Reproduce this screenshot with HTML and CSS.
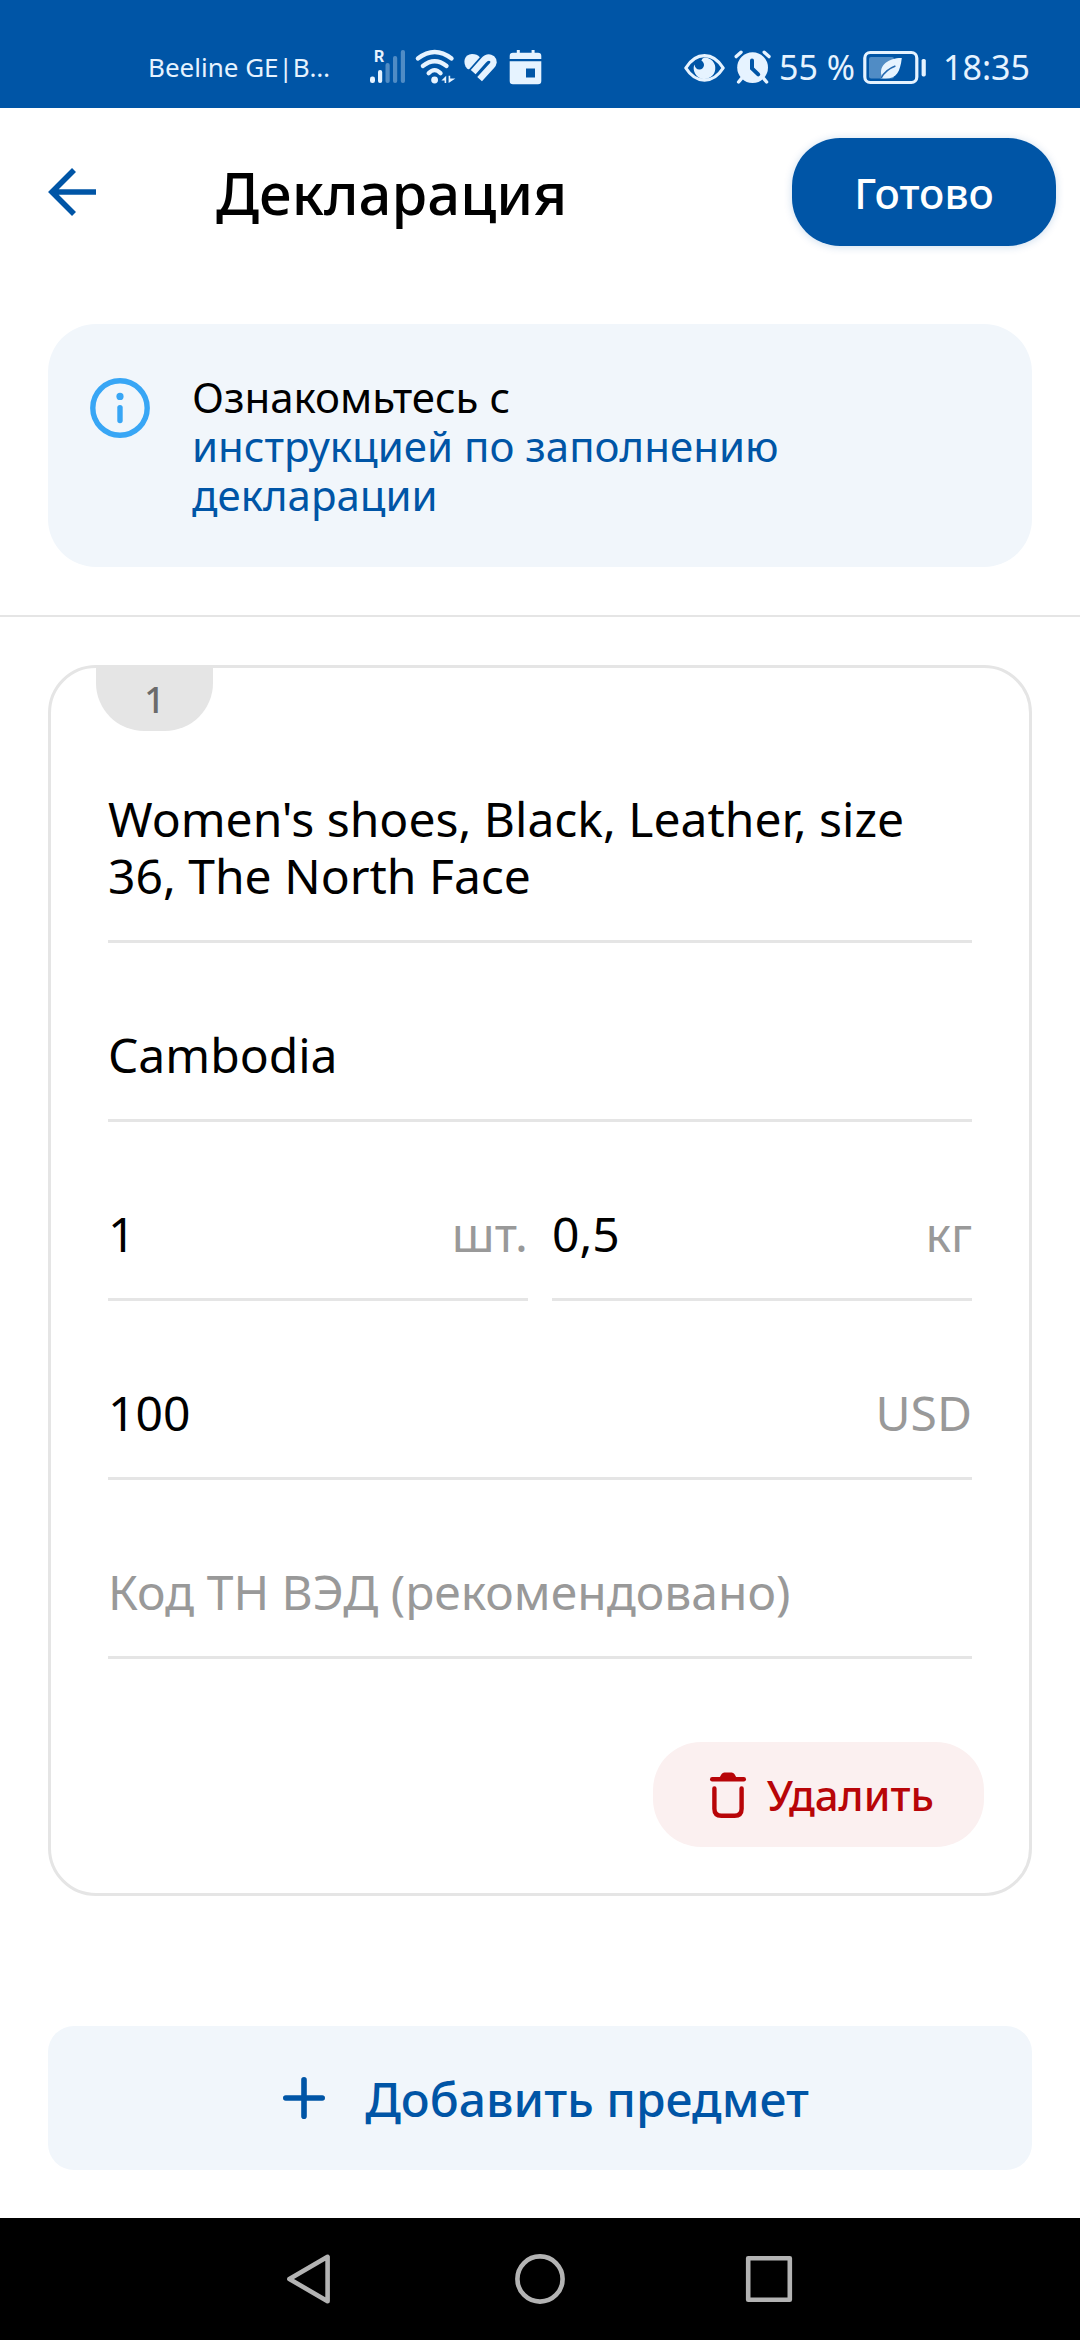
FILE: index.html
```html
<!DOCTYPE html>
<html lang="ru">

<head>
    <meta charset="UTF-8" />
    <meta name="viewport" content="width=device-width, initial-scale=1" />
    <title>Декларация</title>
    <link rel="stylesheet" href="styles.css">
</head>

<body>
    <div class="status-bar">
        <span class="carrier">Beeline GE|B…</span>
        <div class="status-icons">
            <svg width="36" height="36" viewBox="0 0 36 36" fill="currentColor">
                <text x="4" y="13" class="roaming">R</text>
                <rect x="0" y="27.5" width="5" height="6.5" rx="2.2" />
                <rect x="8" y="21" width="4.2" height="13" rx="2" />
                <g opacity="0.35">
                    <rect x="15.5" y="14" width="4.2" height="20" rx="2" />
                    <rect x="23" y="7" width="4.2" height="27" rx="2" />
                    <rect x="30.8" y="1" width="4.2" height="33" rx="2" />
                </g>
            </svg>
            <svg width="42" height="36" viewBox="0 0 42 36" fill="none" stroke="currentColor" stroke-width="4.2" stroke-linecap="round">
                <path d="M3.8 9.5Q20.7 -3.5 37.6 9.5" />
                <path d="M8.8 17Q20.7 7.5 32.6 17" />
                <path d="M14.6 24.3Q20.6 18 26.6 24.3" />
                <circle cx="20.6" cy="31" r="3.4" fill="currentColor" stroke="none" />
                <path d="M32.2 26.8V34H30.6V31.4H27.4ZM34.6 34V26.8H36.2V29.4H41.4Z" fill="currentColor" stroke="none" />
            </svg>
            <svg width="36" height="36" viewBox="0 0 36 36" fill="none">
                <path d="M3 19.5C-2 13.5 .5 5 8 5C11.5 5 14 6.2 15.8 8.2L5.4 20Q4 20.6 3 19.5Z" fill="currentColor" />
                <path d="M9.2 23.2L19.4 11.6Q23.8 6.8 28 9.6Q31.6 13 27.2 17.4L15.6 30.2" stroke="currentColor" stroke-width="6.4" />
            </svg>
            <svg width="36" height="36" viewBox="0 0 36 36" fill="currentColor">
                <path d="M1.7 10V7Q1.7 3.8 5 3.8H8.8V1H11.8V3.8H23.6V1H26.6V3.8H30Q33.3 3.8 33.3 7V10Z" />
                <path fill-rule="evenodd" d="M1.7 12.2H33.3V32Q33.3 35.3 30 35.3H5Q1.7 35.3 1.7 32ZM18 19.5V28.6H27V19.5Z" />
            </svg>
        </div>
        <div class="status-right">
            <svg width="42" height="36" viewBox="0 0 42 36">
                <path d="M1.8 19C12 2.5 29 2.5 39.2 19C29 35.2 12 35.2 1.8 19Z" fill="none" stroke="currentColor" stroke-width="3.2" stroke-linejoin="round" />
                <path fill="currentColor" d="M20.5 8.4A10.8 10.8 0 1 1 10.4 15.4C11.2 19 13 20.6 15.6 20.4C20 20 22 14.6 17.4 11.4Q18.2 9 20.5 8.4Z" />
            </svg>
            <svg width="37" height="36" viewBox="0 0 37 36" fill="none" stroke="currentColor" stroke-width="3.4" stroke-linecap="round">
                <circle cx="18.6" cy="18.6" r="15.4" fill="currentColor" stroke="none" />
                <path d="M2.2 7.6L7 3.2M30.2 3.2L35 7.6M7.4 29.6L4.6 33M29.8 29.6L32.6 33" />
                <path d="M18 11.4V19.4L24.2 25.4" stroke="#0055a6" stroke-width="4" />
            </svg>
            <span class="status-text">55 %</span>
            <svg width="64" height="36" viewBox="0 0 64 36" fill="none">
                <rect x="1.8" y="3.5" width="52" height="30" rx="5.5" stroke="currentColor" stroke-width="3.2" />
                <rect x="6" y="8" width="25" height="21.4" rx="2" fill="currentColor" opacity="0.35" />
                <rect x="58.6" y="10" width="4.2" height="17.4" rx="1.6" fill="currentColor" />
                <path d="M38.8 9C27 8.6 15.5 15.5 18.6 26.6L17.6 29.2L20.4 29.4C33 30.4 37 24 38.8 9Z" fill="currentColor" />
                <path d="M18.2 29C21.5 22.5 26 19.4 32.4 17" stroke="#2469b0" stroke-width="1.6" />
            </svg>
            <span class="status-text clock">18:35</span>
        </div>
    </div>

    <header class="header">
        <button class="back" aria-label="Назад">
            <svg width="48" height="48" viewBox="0 0 48 48" fill="none" stroke="currentColor" stroke-width="5.6">
                <path d="M26 2L4 24L26 46M5 24H48" />
            </svg>
        </button>
        <h1>Декларация</h1>
        <button class="done">Готово</button>
    </header>

    <section class="notice">
        <svg class="notice-icon" width="60" height="60" viewBox="0 0 60 60" fill="none" stroke="currentColor">
            <circle cx="30" cy="30" r="27.2" stroke-width="5.4" />
            <circle cx="30" cy="18.4" r="3.6" fill="currentColor" stroke="none" />
            <path d="M30 29.6V42.6" stroke-width="5.4" stroke-linecap="round" />
        </svg>
        <p>Ознакомьтесь с <a href="#">инструкцией по заполнению декларации</a></p>
    </section>

    <main class="items">
        <form class="card" id="item1">
            <span class="badge">1</span>
            <div class="field">
                <textarea rows="2" aria-label="Описание предмета">Women's shoes, Black, Leather, size 36, The North Face</textarea>
            </div>
            <div class="field">
                <input type="text" aria-label="Страна происхождения" value="Cambodia">
            </div>
            <div class="field-row">
                <div class="field">
                    <input type="text" id="count" aria-label="Количество" value="1">
                    <label for="count">шт.</label>
                </div>
                <div class="field">
                    <input type="text" id="weight" aria-label="Вес" value="0,5">
                    <label for="weight">кг</label>
                </div>
            </div>
            <div class="field">
                <input type="text" id="price" aria-label="Стоимость" value="100">
                <label for="price">USD</label>
            </div>
            <div class="field">
                <input type="text" aria-label="Код ТН ВЭД" placeholder="Код ТН ВЭД (рекомендовано)">
            </div>
            <button type="button" class="delete">
                <svg width="36" height="46" viewBox="0 0 36 46" fill="none" stroke="currentColor" stroke-width="4.4" stroke-linecap="round">
                    <path d="M2.2 7.2H33.8" />
                    <path d="M9 6.5L11.6 2Q12.6 .4 14.4 .4H21.6Q23.4 .4 24.4 2L27 6.5Z" fill="currentColor" stroke="none" />
                    <path d="M4.4 16.4V36.8Q4.4 43.8 11.4 43.8H24.6Q31.6 43.8 31.6 36.8V16.4" />
                </svg>
                Удалить
            </button>
        </form>
    </main>

    <div class="actions">
        <button class="add">
            <svg width="42" height="42" viewBox="0 0 42 42" fill="none" stroke="currentColor" stroke-width="5.6" stroke-linecap="round">
                <path d="M21 2.8V39.2M2.8 21H39.2" />
            </svg>
            Добавить предмет
        </button>
    </div>

    <nav class="nav-bar">
        <button aria-label="Назад">
            <svg width="50" height="50" viewBox="0 0 50 50">
                <path d="M42.6 2.8V47.2L4.4 25Z" />
            </svg>
        </button>
        <button aria-label="Домой">
            <svg width="50" height="50" viewBox="0 0 50 50">
                <circle cx="25" cy="25" r="22.6" />
            </svg>
        </button>
        <button aria-label="Недавние">
            <svg width="50" height="50" viewBox="0 0 50 50">
                <rect x="3.2" y="4.2" width="41.6" height="41.6" />
            </svg>
        </button>
    </nav>
</body>

</html>
```
FILE: styles.css
```css
:root {
    --blue: #0055a6;
    --light: #f1f6fb;
    --line: #e5e5e5;
    --grey: #999;
    --red: #b80508;
}

* {
    box-sizing: border-box;
}

body {
    margin: 0;
    min-height: 100vh;
    display: flex;
    flex-direction: column;
    font-family: "Noto Sans", sans-serif;
    font-size: 48px;
    line-height: 57px;
    color: #000;
    background-color: #fff;
}

svg {
    display: block;
    flex-shrink: 0;
    overflow: visible;
}

button {
    display: flex;
    align-items: center;
    justify-content: center;
    padding: 0;
    border: none;
    background: none;
    font-family: inherit;
    font-weight: 500;
    cursor: pointer;
}

/* status bar */
.status-bar {
    display: flex;
    align-items: center;
    height: 108px;
    padding: 26px 50px 0 148px;
    background-color: var(--blue);
    color: #e6f3ff;
}

.carrier {
    font-size: 26px;
    margin-right: 40px;
}

.status-icons {
    display: flex;
    gap: 8px;
}

.roaming {
    font-family: Roboto, sans-serif;
    font-size: 16px;
    font-weight: 700;
}

.status-right {
    display: flex;
    align-items: center;
    gap: 8px;
    margin-left: auto;
}

.status-text {
    font-size: 34px;
}

.clock {
    margin-left: 8px;
}

/* header */
.header {
    display: flex;
    align-items: center;
    padding: 30px 24px 78px 48px;
}

.back {
    color: var(--blue);
    margin-right: 120px;
}

h1 {
    flex: 1;
    margin: 0;
    font-size: 58px;
    font-weight: 500;
}

.done {
    width: 264px;
    height: 108px;
    border-radius: 48px;
    background-color: var(--blue);
    color: #fff;
    font-size: 42px;
    box-shadow: 0 1px 8px rgba(0, 85, 166, 0.2);
}

/* notice */
.notice {
    display: flex;
    align-items: flex-start;
    gap: 42px;
    margin: 0 48px;
    padding: 48px 42px;
    border-radius: 48px;
    background-color: var(--light);
    font-size: 42px;
    line-height: 49px;
}

.notice-icon {
    margin-top: 6px;
    color: #38a6f5;
}

.notice p {
    margin: 0;
}

.notice a {
    display: block;
    color: var(--blue);
    text-decoration: none;
}

/* items */
.items {
    margin-top: 48px;
    padding: 48px;
    border-top: 2px solid var(--line);
}

.card {
    position: relative;
    display: flex;
    flex-direction: column;
    gap: 83px;
    padding: 122px 57px 46px;
    border: 3px solid var(--line);
    border-radius: 48px;
}

.badge {
    position: absolute;
    top: 0;
    left: 45px;
    width: 117px;
    height: 63px;
    border-radius: 0 0 48px 48px;
    background-color: var(--line);
    color: #6b6b6b;
    font-size: 36px;
    font-weight: 500;
    line-height: 63px;
    text-align: center;
}

.field {
    display: flex;
    flex: 1;
    min-width: 0;
    padding-bottom: 36px;
    border-bottom: 3px solid var(--line);
}

.field-row {
    display: flex;
    gap: 24px;
}

.field input,
.field textarea {
    flex: 1;
    min-width: 0;
    margin: 0;
    padding: 0;
    border: none;
    outline: none;
    background: none;
    resize: none;
    overflow: hidden;
    font: inherit;
    color: inherit;
}

.field input {
    height: 57px;
}

.field label,
.field input::placeholder {
    color: var(--grey);
    opacity: 1;
}

.delete {
    align-self: flex-end;
    gap: 21px;
    height: 105px;
    margin-right: -12px;
    padding: 0 50px 0 57px;
    border-radius: 48px;
    background-color: #fbf0f0;
    color: var(--red);
    font-size: 42px;
}

/* bottom */
.actions {
    margin-top: auto;
    padding: 48px;
}

.add {
    width: 100%;
    height: 144px;
    gap: 40px;
    padding-left: 12px;
    border-radius: 26px;
    background-color: var(--light);
    color: var(--blue);
    font-size: 48px;
}

.nav-bar {
    display: flex;
    align-items: center;
    justify-content: center;
    gap: 180px;
    height: 122px;
    background-color: #000;
}

.nav-bar svg {
    fill: none;
    stroke: #b3b3b3;
    stroke-width: 4.6;
    stroke-linejoin: round;
}
```
